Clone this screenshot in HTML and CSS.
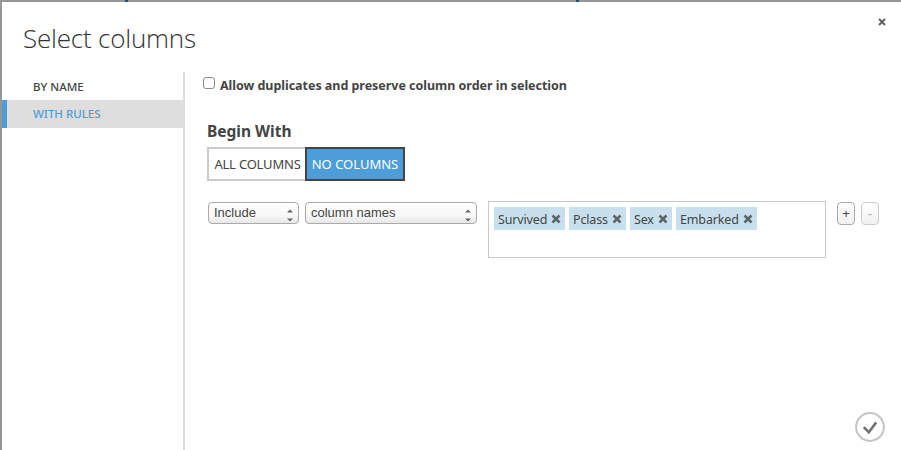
FILE: index.html
```
<!DOCTYPE html>
<html lang="en">
<head>
<meta charset="utf-8">
<title>Select columns</title>
<link rel="stylesheet" href="styles.css">
</head>
<body>
<div class="backdrop-edge"><i></i><i></i></div>
<div class="dialog">
  <header class="header">
    <h1>Select columns</h1>
    <button class="close" aria-label="Close"><svg width="8" height="8" viewBox="0 0 8 8"><path d="M1 1l6 6M7 1L1 7" stroke="#606060" stroke-width="2"/></svg></button>
  </header>
  <div class="body">
    <nav class="tabs">
      <a class="tab by-name"><span>BY NAME</span></a>
      <a class="tab active"><span>WITH RULES</span></a>
    </nav>
    <main class="content">
      <label class="duplicates"><span class="checkbox"></span><span class="dup-text">Allow duplicates and preserve column order in selection</span></label>
      <h2><span>Begin With</span></h2>
      <div class="segment">
        <button class="all"><span>ALL COLUMNS</span></button>
        <button class="none"><span>NO COLUMNS</span></button>
      </div>
      <div class="rule">
        <div class="select include"><span>Include</span><svg width="6" height="14" viewBox="0 0 6 14"><path d="M0 3.5L3 0.5l3 3zM0 9.5l3 3 3-3z" fill="#666"/></svg></div>
        <div class="select names"><span>column names</span><svg width="6" height="14" viewBox="0 0 6 14"><path d="M0 3.5L3 0.5l3 3zM0 9.5l3 3 3-3z" fill="#666"/></svg></div>
        <div class="tags">
          <div class="tag t1"><span>Survived</span><svg width="10" height="10" viewBox="0 0 10 10"><path d="M1.5 1.5l7 7M8.5 1.5l-7 7" stroke="#5e6468" stroke-width="2.5"/></svg></div>
          <div class="tag t2"><span>Pclass</span><svg width="10" height="10" viewBox="0 0 10 10"><path d="M1.5 1.5l7 7M8.5 1.5l-7 7" stroke="#5e6468" stroke-width="2.5"/></svg></div>
          <div class="tag t3"><span>Sex</span><svg width="10" height="10" viewBox="0 0 10 10"><path d="M1.5 1.5l7 7M8.5 1.5l-7 7" stroke="#5e6468" stroke-width="2.5"/></svg></div>
          <div class="tag t4"><span>Embarked</span><svg width="10" height="10" viewBox="0 0 10 10"><path d="M1.5 1.5l7 7M8.5 1.5l-7 7" stroke="#5e6468" stroke-width="2.5"/></svg></div>
        </div>
        <button class="small add">+</button>
        <button class="small remove">-</button>
      </div>
    </main>
  </div>
  <button class="confirm" aria-label="Confirm"><svg width="30" height="30" viewBox="0 0 30 30"><circle cx="15" cy="15" r="13.9" fill="#fff" stroke="#c4c4c4" stroke-width="2"/><path d="M8.8 15.2l5 5 7.4-9.8" fill="none" stroke="#747474" stroke-width="2.6"/></svg></button>
</div>
</body>
</html>
```

FILE: styles.css
```
* { box-sizing: border-box; }
html, body { margin: 0; height: 450px; overflow: hidden; background: #fff; }
body { font-family: "Noto Sans", "Open Sans", sans-serif; font-size: 12px; color: #444; }
button { margin: 0; padding: 0; font: inherit; color: inherit; background: none; border: 0; }
span { white-space: nowrap; }
svg { display: block; flex: none; }
.backdrop-edge { height: 2px; background: #969696; display: flex; padding-left: 125px; gap: 448px; }
.backdrop-edge i { width: 3px; height: 2px; background: #1b527c; }
.dialog { position: relative; height: 448px; border-left: 2px solid #969696; background: #fff; }
.header { display: flex; justify-content: space-between; height: 70px; padding: 16px 15px 0 21px; }
h1 { margin: 0; font: 300 26px/40px "Open Sans", sans-serif; letter-spacing: -0.2px; color: #333; white-space: nowrap; }
.close { width: 8px; height: 8px; }
.body { display: flex; height: 378px; }
.tabs { width: 183px; border-right: 2px solid #ddd; }
.tab { display: flex; height: 28px; padding-left: 31px; font-size: 11.5px; line-height: 29px; font-weight: 500; }
.tab.active { border-left: 5px solid #4d9dd8; padding-left: 26px; background: #dedede; color: #4d9dd8; line-height: 27px; }
.content { flex: 1; padding-left: 22px; }
.duplicates { display: flex; height: 28px; padding-left: 1px; font-size: 12.5px; font-weight: 700; letter-spacing: -0.03px; }
.checkbox { width: 12px; height: 12px; margin: 5px 5px 0 -5px; border: 1px solid #8c8c8c; border-radius: 3px; background: #fff; }
.dup-text { line-height: 27px; }
h2 { margin: 19px 0 0; font-size: 15.5px; line-height: 24px; font-weight: 700; }
.segment { display: flex; height: 34px; margin-top: 4px; font-size: 13px; }
.segment button { height: 34px; }
.segment .all { width: 98px; padding-left: 1px; border: 2px solid #ccc; border-right: 0; letter-spacing: -0.2px; }
.segment .none { width: 100px; border: 2px solid #444; background: #4d9dd8; color: #fff; }
.rule { display: flex; align-items: flex-start; margin-top: 20px; }
.select { display: flex; justify-content: space-between; align-items: center; height: 22px; margin-top: 1px; padding: 0 5px; border: 1px solid #aaa; border-radius: 4px; background: linear-gradient(#fff, #f8f8f8 60%, #e8e8e8); font: 13px/20px "Liberation Sans", sans-serif; }
.select svg { margin-top: 5px; }
.include { width: 91px; margin-left: 1px; }
.names { width: 172px; margin-left: 6px; }
.tags { display: flex; gap: 4px; width: 338px; height: 57px; margin-left: 11px; padding: 5px; border: 1px solid #c8c8c8; }
.tag { display: flex; align-items: center; justify-content: space-between; height: 23px; padding: 0 4px; background: #c8e0ed; font-size: 12.5px; letter-spacing: -0.15px; }
.tag span { line-height: 23px; padding-top: 1px; }
.t1 { width: 71px; } .t2 { width: 57px; } .t3 { width: 42px; } .t4 { width: 81px; }
.small { width: 18px; height: 23px; margin: 1px 0 0 11px; border: 1px solid #aaa; border-radius: 4px; background: linear-gradient(#fff, #f0f0f0); font: 13px/19px "Liberation Sans", sans-serif; }
.remove { margin-left: 6px; border-color: #ccc; color: #aaa; }
.confirm { position: absolute; right: 16px; bottom: 8px; }
```
